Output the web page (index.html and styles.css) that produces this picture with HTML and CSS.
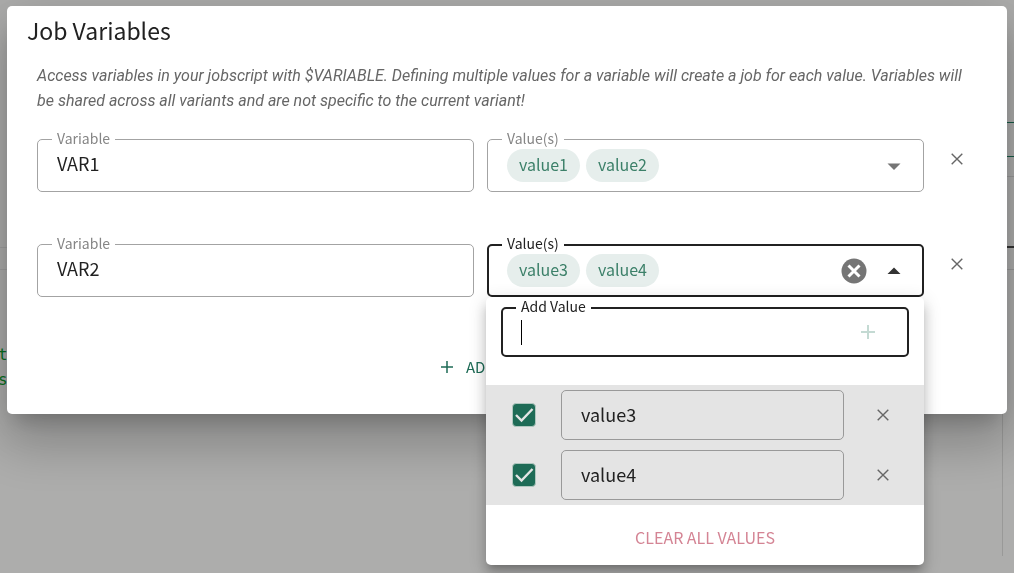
FILE: index.html
```html
<!DOCTYPE html>
<html lang="en">
<head>
<meta charset="utf-8">
<title>Job Variables</title>
<meta name="viewport" content="width=device-width, initial-scale=1">
<link rel="stylesheet" href="styles.css">
</head>
<body>
<div class="page">
  <div class="page-code"><code>t<br>s</code></div>
  <div class="page-side">
    <div class="page-tabs"></div>
    <div class="page-bar"></div>
    <div class="page-strip"></div>
    <div class="page-rule"></div>
    <div class="page-head"></div>
    <div class="page-panel"></div>
  </div>
</div>

<div class="scrim">
  <section class="dialog" role="dialog" aria-modal="true" aria-labelledby="title">
    <h1 class="dialog-title" id="title">Job Variables</h1>
    <div class="dialog-body">
      <p class="hint">Access variables in your jobscript with $VARIABLE. Defining multiple values for a variable will create a job for each value. Variables will be shared across all variants and are not specific to the current variant!</p>

      <div class="row">
        <div class="field">
          <label class="field-label" for="var1">Variable</label>
          <input class="field-input" id="var1" type="text" value="VAR1">
        </div>
        <div class="field" role="group" aria-labelledby="values1">
          <span class="field-label" id="values1">Value(s)</span>
          <div class="chips"><span class="chip">value1</span><span class="chip">value2</span></div>
          <button class="icon-button" type="button" aria-label="Open values"><svg class="arrow" viewBox="0 0 30 30"><path d="M8.500 12.500h13L15 19z"/></svg></button>
        </div>
        <button class="remove" type="button" aria-label="Remove VAR1"><svg class="cross" viewBox="0 0 12 12"><path d="M.7 .7l10.600 10.600M11.300 .7L.7 11.300"/></svg></button>
      </div>

      <div class="row">
        <div class="field">
          <label class="field-label" for="var2">Variable</label>
          <input class="field-input" id="var2" type="text" value="VAR2">
        </div>
        <div class="field field-active" role="group" aria-labelledby="values2">
          <span class="field-label" id="values2">Value(s)</span>
          <div class="chips"><span class="chip">value3</span><span class="chip">value4</span></div>
          <button class="icon-button" type="button" aria-label="Clear values"><svg class="clear" viewBox="0 0 30 30"><circle cx="15" cy="15" r="12.500"/><path d="M9.500 9.500l11 11M20.500 9.500l-11 11"/></svg></button>
          <button class="icon-button" type="button" aria-label="Close values" aria-expanded="true"><svg class="arrow arrow-open" viewBox="0 0 30 30"><path d="M8.500 18h13L15 11.500z"/></svg></button>

          <div class="menu">
            <div class="menu-add">
              <div class="field field-active field-compact">
                <label class="field-label" for="add">Add Value</label>
                <span class="caret"></span>
                <input class="add-input" id="add" type="text">
                <button class="add-value" type="button" aria-label="Add value"><svg class="plus" viewBox="0 0 14 14"><path d="M7 0v14M0 7h14"/></svg></button>
              </div>
            </div>
            <ul class="menu-list">
              <li class="menu-item">
                <label class="check"><input class="check-box" type="checkbox" checked aria-label="Use value3"><svg class="check-mark" viewBox="0 0 24 24"><path d="M4 12l5.500 5.500L20.500 6"/></svg></label>
                <div class="field field-compact field-muted"><input class="field-input" type="text" value="value3" aria-label="First value"></div>
                <button class="remove" type="button" aria-label="Remove value3"><svg class="cross" viewBox="0 0 12 12"><path d="M.7 .7l10.600 10.600M11.300 .7L.7 11.300"/></svg></button>
              </li>
              <li class="menu-item">
                <label class="check"><input class="check-box" type="checkbox" checked aria-label="Use value4"><svg class="check-mark" viewBox="0 0 24 24"><path d="M4 12l5.500 5.500L20.500 6"/></svg></label>
                <div class="field field-compact field-muted"><input class="field-input" type="text" value="value4" aria-label="Second value"></div>
                <button class="remove" type="button" aria-label="Remove value4"><svg class="cross" viewBox="0 0 12 12"><path d="M.7 .7l10.600 10.600M11.300 .7L.7 11.300"/></svg></button>
              </li>
            </ul>
            <button class="clear-all" type="button">CLEAR ALL VALUES</button>
          </div>
        </div>
        <button class="remove" type="button" aria-label="Remove VAR2"><svg class="cross" viewBox="0 0 12 12"><path d="M.7 .7l10.600 10.600M11.300 .7L.7 11.300"/></svg></button>
      </div>

      <button class="add-variable" type="button"><svg class="plus-small" viewBox="0 0 12 12"><path d="M6 0v12M0 6h12"/></svg>ADD</button>
    </div>
  </section>
</div>
</body>
</html>
```
FILE: styles.css
```css
* { box-sizing: border-box; }

body {
  margin: 0;
  min-height: 100vh;
  overflow: hidden;
  background: #adadac;
  color: #212121;
  font: 18px/25px "Noto Sans CJK SC", "Noto Sans", sans-serif;
}

button, input { font: inherit; color: inherit; }

button {
  display: flex;
  align-items: center;
  justify-content: center;
  padding: 0;
  border: 0;
  background: none;
  cursor: pointer;
}

svg { display: block; fill: none; }

/* Page behind the dialog */
.page {
  display: grid;
  grid-template-columns: 1fr 12px;
}
.page-code {
  align-self: start;
  margin-top: 247px;
  padding-top: 94px;
  border-top: 1px solid #a0a0a0;
  background: linear-gradient(#a0a0a0, #a0a0a0) 0 21px / 100% 1px no-repeat;
}
.page-code code {
  display: block;
  margin-left: -2px;
  color: #087020;
  font: 16px/25px "DejaVu Sans Mono", monospace;
}
.page-tabs { height: 123px; border-bottom: 1px solid #175c47; }
.page-bar { height: 34px; border-bottom: 1px solid #175c47; }
.page-strip { height: 20px; border-bottom: 1px solid #999; }
.page-rule { height: 71px; border-bottom: 2px solid #333; }
.page-head { height: 22px; border-bottom: 1px solid #999; }
.page-panel { height: 286px; margin-left: 0; border-left: 1px solid #999998; }

.scrim {
  position: fixed;
  inset: 0;
  padding: 6px 7px;
}

.dialog {
  padding: 6px 20px 30px;
  border-radius: 5px;
  background: #fff;
  box-shadow: 0 14px 19px -9px rgba(0, 0, 0, .2), 0 30px 48px 4px rgba(0, 0, 0, .14), 0 11px 58px 10px rgba(0, 0, 0, .12);
}
.dialog-title {
  margin: 0;
  font-size: 23px;
  font-weight: 400;
  line-height: 36px;
}
.dialog-body { padding: 15px 10px 0; }
.hint {
  margin: 0 0 26px;
  color: #666;
  font-family: Roboto, sans-serif;
  font-size: 16px;
  font-style: italic;
}

.row {
  display: grid;
  grid-template-columns: 1fr 1fr 40px;
  gap: 13px;
  align-items: start;
  margin-bottom: 52px;
}

.field {
  position: relative;
  display: flex;
  align-items: center;
  min-width: 0;
  height: 53px;
  padding: 0 14px 0 19px;
  border: 1px solid #a3a3a3;
  border-radius: 5px;
}
.field-active {
  padding: 0 13px 0 18px;
  border: 2px solid #212121;
}
.field-compact { height: 50px; }
.field-muted { border-color: #999; }
.field-label {
  position: absolute;
  top: -11px;
  left: 14px;
  padding: 0 5px;
  background: #fff;
  color: #858585;
  font-size: 14px;
  line-height: 18px;
}
.field-active > .field-label {
  top: -12px;
  left: 13px;
  color: #212121;
}
.field-input, .add-input {
  flex: 1;
  width: 100%;
  min-width: 0;
  padding: 0;
  border: 0;
  outline: 0;
  background: none;
}
.field-input { padding-bottom: 2px; line-height: 30px; }
.field-label + .field-input { padding-bottom: 5px; }

.chips { display: flex; flex: 1; gap: 6px; }
.chip {
  padding: 0 12px 2px;
  border-radius: 17px;
  background: #e6eeec;
  color: #3c8069;
  font-size: 16px;
  line-height: 31px;
}

.icon-button { width: 30px; height: 30px; }
.icon-button + .icon-button { margin-left: 10px; }
.arrow { width: 30px; height: 30px; fill: #757575; }
.arrow-open { fill: #333; }
.clear { width: 30px; height: 30px; fill: #757575; stroke: #fff; stroke-width: 3; }
.clear circle { stroke: none; }

.remove { width: 40px; height: 40px; }
.cross { width: 12px; height: 12px; stroke: #666; stroke-width: 1.4; }

/* Value editor that drops from the active field */
.menu {
  position: absolute;
  z-index: 1;
  top: 51px;
  left: -3px;
  right: -2px;
  border-radius: 5px;
  background: #fff;
  box-shadow: 0 6px 6px -4px rgba(0, 0, 0, .2), 0 10px 12px 1px rgba(0, 0, 0, .14), 0 4px 17px 2px rgba(0, 0, 0, .12);
}
.menu-add { padding: 10px 15px 28px; }
.menu-add .field { padding-right: 24px; }
.caret { width: 1px; height: 25px; background: #000; }
.add-input { caret-color: transparent; }
.add-value { width: 30px; height: 30px; }
.plus { width: 14px; height: 14px; stroke: #c4dad3; stroke-width: 2; }

.menu-list {
  margin: 0;
  padding: 0;
  list-style: none;
  background: #e4e4e4;
}
.menu-item {
  display: flex;
  align-items: center;
  height: 60px;
  padding: 0 21px 0 26px;
}
.menu-item .field { flex: 1; margin: 0 19px 0 25px; }

.check { display: grid; }
.check-box, .check-mark { grid-area: 1 / 1; }
.check-box {
  width: 24px;
  height: 24px;
  margin: 0;
  appearance: none;
  border: 1px solid #b0c7bf;
  border-radius: 4px;
  background: #1e6b56;
}
.check-mark { width: 24px; height: 24px; stroke: #e4e4e4; stroke-width: 2.4; pointer-events: none; }

.clear-all {
  width: 100%;
  height: 60px;
  padding-top: 5px;
  color: #d48494;
  font-size: 16px;
}

.add-variable {
  width: 132px;
  height: 35px;
  margin: 0 auto;
  justify-content: flex-start;
  gap: 13px;
  color: #1e6b56;
  font-size: 15px;
}
.plus-small { width: 12px; height: 12px; stroke: #1e6b56; stroke-width: 1.5; }
```
